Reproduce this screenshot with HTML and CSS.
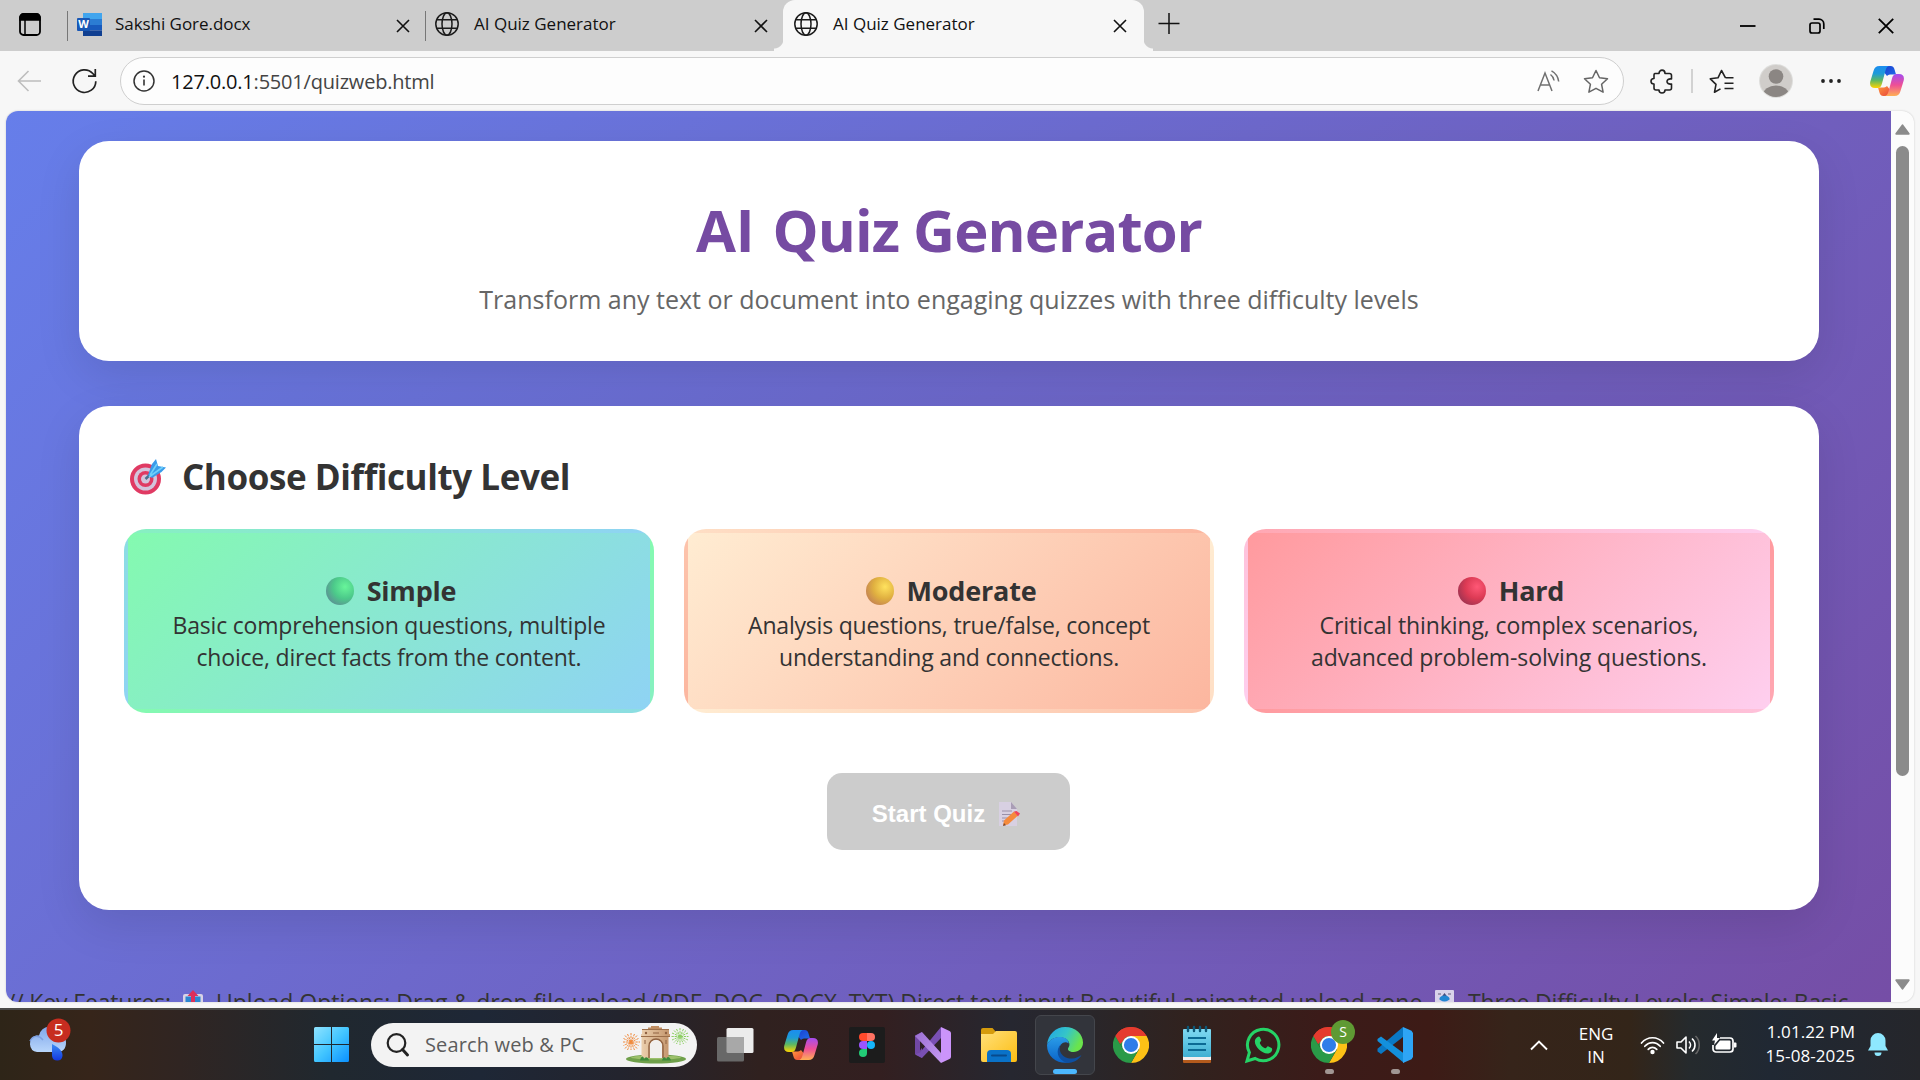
FILE: index.html
```html
<!DOCTYPE html>
<html lang="en">
<head>
<meta charset="utf-8">
<title>AI Quiz Generator</title>
<link rel="stylesheet" href="styles.css">
</head>
<body>
<svg class="defs" width="0" height="0" aria-hidden="true">
  <defs>
    <linearGradient id="cpA" x1="0" y1="0" x2="0" y2="1"><stop offset="0" stop-color="#1b8df0"/><stop offset=".35" stop-color="#1d9bd8"/><stop offset=".65" stop-color="#5bb864"/><stop offset="1" stop-color="#ffd400"/></linearGradient>
    <linearGradient id="cpB" x1="0" y1="0" x2="0" y2="1"><stop offset="0" stop-color="#a44cf0"/><stop offset=".5" stop-color="#ee4f96"/><stop offset="1" stop-color="#ffb054"/></linearGradient>
    <linearGradient id="cpC" x1="0" y1="0" x2="1" y2="1"><stop offset="0" stop-color="#1a3fd0"/><stop offset="1" stop-color="#1f6ce8"/></linearGradient>
    <linearGradient id="cpD" x1="0" y1="0" x2="1" y2="1"><stop offset="0" stop-color="#ff9a3c"/><stop offset="1" stop-color="#e8413c"/></linearGradient>
    <linearGradient id="win" x1="0" y1="0" x2="1" y2="1"><stop offset="0" stop-color="#8fe3ff"/><stop offset=".5" stop-color="#43c6ff"/><stop offset="1" stop-color="#0a90ff"/></linearGradient>
    <linearGradient id="edgeTop" x1="0" y1="0" x2="1" y2=".4"><stop offset="0" stop-color="#1fa2ea"/><stop offset=".55" stop-color="#35c5c8"/><stop offset="1" stop-color="#6ae44c"/></linearGradient>
    <linearGradient id="edgeLow" x1="0" y1="0" x2="0" y2="1"><stop offset="0" stop-color="#2a9ce8"/><stop offset="1" stop-color="#0a63c8"/></linearGradient>
    <linearGradient id="folder" x1="0" y1="0" x2="1" y2="1"><stop offset="0" stop-color="#ffe07a"/><stop offset="1" stop-color="#fdbd12"/></linearGradient>
    <linearGradient id="note" x1="0" y1="0" x2="0" y2="1"><stop offset="0" stop-color="#7fd9f2"/><stop offset="1" stop-color="#3fb0d2"/></linearGradient>
    <linearGradient id="cloud" x1="0" y1="0" x2="0" y2="1"><stop offset="0" stop-color="#7ea6ea"/><stop offset="1" stop-color="#b9d6fb"/></linearGradient>
    <linearGradient id="drop" x1="0" y1="0" x2="0" y2="1"><stop offset="0" stop-color="#3b8cf5"/><stop offset="1" stop-color="#1338e0"/></linearGradient>
    <linearGradient id="stone" x1="0" y1="0" x2="1" y2="0"><stop offset="0" stop-color="#ecd0ae"/><stop offset="1" stop-color="#c4956c"/></linearGradient>
    <linearGradient id="vs" x1="0" y1="0" x2="1" y2="1"><stop offset="0" stop-color="#9a6fd0"/><stop offset="1" stop-color="#c79af5"/></linearGradient>
    <radialGradient id="gDot" cx=".68" cy=".35" r=".7"><stop offset="0" stop-color="#68f59a"/><stop offset=".6" stop-color="#4cc98a"/><stop offset="1" stop-color="#5a9a93"/></radialGradient>
    <radialGradient id="yDot" cx=".68" cy=".35" r=".7"><stop offset="0" stop-color="#ffe25e"/><stop offset=".6" stop-color="#e0b040"/><stop offset="1" stop-color="#c98a50"/></radialGradient>
    <radialGradient id="rDot" cx=".68" cy=".35" r=".7"><stop offset="0" stop-color="#ff5876"/><stop offset=".6" stop-color="#dc3a54"/><stop offset="1" stop-color="#a83552"/></radialGradient>
    <symbol id="globe" viewBox="0 0 24 24"><g fill="none" stroke="#1b1b1b" stroke-width="1.5"><circle cx="12" cy="12" r="11.2"/><ellipse cx="12" cy="12" rx="5" ry="11.2"/><path d="M1.8 7.7h20.4M1.8 16.3h20.4"/></g></symbol>
    <symbol id="x" viewBox="0 0 14 14"><path d="M1 1l12 12M13 1L1 13" fill="none" stroke="#111" stroke-width="1.6"/></symbol>
    <symbol id="copilot" viewBox="0 0 34 30">
      <path d="M14 0h6.500c2.500 0 3.500 1.500 4.200 4l1.300 4.500h-4.500c-2 0-3.300.2-4.500 1.500L13 5z" fill="url(#cpC)"/>
      <path d="M20 30h-6.500c-2.500 0-3.500-1.500-4.200-4L8 21.500h4.500c2 0 3.300-.2 4.500-1.500L21 25z" fill="url(#cpD)"/>
      <path d="M9.500 0H20c-2.800 0-3.800 2-4.500 4.500L12 17.500c-.8 3-2 4.500-4.500 4.500H5c-4 0-5.600-2.500-4.700-6.500L3.500 5C4.500 1.700 6 0 9.500 0z" fill="url(#cpA)"/>
      <path d="M24.500 30H14c2.800 0 3.800-2 4.500-4.500L22 12.500c.8-3 2-4.500 4.500-4.500H29c4 0 5.600 2.500 4.700 6.500L30.500 25c-1 3.300-2.500 5-6 5z" fill="url(#cpB)"/>
    </symbol>
    <symbol id="chrome" viewBox="0 0 36 36">
      <path d="M18 18L2.400 9A18 18 0 0 1 33.600 9z" fill="#e53b2e"/><path d="M18 9h15.600A18 18 0 0 1 18 36l7.800-13.500z" fill="#fdc116"/><path d="M10.200 22.500L2.400 9A18 18 0 0 0 18 36l7.800-13.500z" fill="#2a9a48"/><path d="M2.400 9l7.800 13.500L18 9z" fill="#2a9a48"/><path d="M2.400 9A18 18 0 0 1 33.600 9H18a9 9 0 0 0-8.200 5.500L7 17z" fill="#e53b2e"/>
      <circle cx="18" cy="18" r="9" fill="#fff"/><circle cx="18" cy="18" r="7.100" fill="#2f7de9"/>
    </symbol>
  </defs>
</svg>

<div class="screen">
  <header class="tabstrip">
    <div class="tab-actions">
      <svg width="22" height="23" viewBox="0 0 22 23"><rect x="1" y="1" width="20" height="21" rx="3.500" fill="none" stroke="#000" stroke-width="1.800"/><path d="M1 7V4.500A3.500 3.500 0 0 1 4.500 1h13A3.500 3.500 0 0 1 21 4.500V7zM6 7v15" stroke="#000" stroke-width="1.500"/></svg>
    </div>
    <div class="tab">
      <svg class="fav" width="25" height="23" viewBox="0 0 25 23"><rect x="6" y="0" width="19" height="6" fill="#41a5ee"/><rect x="6" y="6" width="19" height="6" fill="#2b7cd3"/><rect x="6" y="12" width="19" height="5.500" fill="#185abd"/><rect x="6" y="17.500" width="19" height="5.500" fill="#103f91"/><rect x="0" y="5" width="13" height="13" rx="1" fill="#1957b5"/><text x="6.500" y="15.200" class="word-w">W</text></svg>
      <span class="tab-title doc">Sakshi Gore.docx</span>
      <svg class="close" width="14" height="14"><use href="#x"/></svg>
    </div>
    <div class="tab">
      <svg class="fav" width="24" height="24"><use href="#globe"/></svg>
      <span class="tab-title">AI Quiz Generator</span>
      <svg class="close" width="14" height="14"><use href="#x"/></svg>
    </div>
    <div class="tab active">
      <svg class="fav" width="24" height="24"><use href="#globe"/></svg>
      <span class="tab-title">AI Quiz Generator</span>
      <svg class="close" width="14" height="14"><use href="#x"/></svg>
    </div>
    <svg class="newtab" width="22" height="22" viewBox="0 0 22 22"><path d="M11 0v21M.5 10.500h21" stroke="#111" stroke-width="1.500"/></svg>
    <div class="window-buttons">
      <svg width="16" height="16" viewBox="0 0 16 16"><path d="M0 8h15.500" stroke="#000" stroke-width="1.800"/></svg>
      <svg width="16" height="16" viewBox="0 0 16 16"><g fill="none" stroke="#000" stroke-width="1.700"><rect x="1" y="5" width="10" height="10" rx="2"/><path d="M4.500 1.200H10a4.800 4.800 0 0 1 4.800 4.800v5"/></g></svg>
      <svg width="16" height="16" viewBox="0 0 16 16"><path d="M.8.8l14.400 14.400M15.200.8L.8 15.200" stroke="#000" stroke-width="1.800"/></svg>
    </div>
  </header>

  <nav class="toolbar">
    <svg class="back" width="25" height="22" viewBox="0 0 25 22"><path d="M24 11H1M11.500 1L1.500 11l10 10" fill="none" stroke="#bdbdbd" stroke-width="1.600"/></svg>
    <svg class="reload" width="25" height="26" viewBox="0 0 25 26"><path d="M23.800 13.200A11.300 11.300 0 1 1 20.800 5.500L23 8M23.300 1v7.200H16" fill="none" stroke="#222" stroke-width="1.700"/></svg>
    <div class="address">
      <svg width="22" height="22" viewBox="0 0 22 22"><circle cx="11" cy="11" r="10" fill="none" stroke="#333" stroke-width="1.500"/><path d="M11 9.500v6" stroke="#333" stroke-width="1.600"/><circle cx="11" cy="6.700" r="1.100" fill="#333"/></svg>
      <span class="url"><span class="host">127.0.0.1</span>:5501/quizweb.html</span>
      <svg class="read" width="24" height="22" viewBox="0 0 24 22"><g fill="none" stroke="#707070" stroke-width="1.500"><path d="M1 21L8 3l7 18M3.500 15h9M13.500 4.500c2 1.500 3.300 3.500 3.600 6M14.500.8c4 2.200 6.600 5.700 7.200 10.700"/></g></svg>
      <svg class="star" width="26" height="25" viewBox="0 0 26 25"><path d="M13 1.500l3.500 7.300 8 1-5.900 5.500 1.500 7.900L13 19.300l-7.100 3.900 1.500-7.900L1.500 9.800l8-1z" fill="none" stroke="#666" stroke-width="1.500" stroke-linejoin="round"/></svg>
    </div>
    <svg class="puzzle" width="24" height="25" viewBox="0 0 24 25"><path d="M5 4.500h4c0-4.500 6-4.500 6 0h4.500a2 2 0 0 1 2 2V10c-6-1-6 6 0 5v4a2 2 0 0 1-2 2H15c0 4-6 4-6 0H6a2 2 0 0 1-2-2v-4c-4 0-4-5.500 0-5.500V6a1.500 1.500 0 0 1 1-1.500z" fill="none" stroke="#222" stroke-width="1.600" stroke-linejoin="round"/></svg>
    <i class="divider"></i>
    <svg class="favs" width="26" height="25" viewBox="0 0 26 25"><path d="M16.500 8.800L12.500 1.500 9 8.800l-7.700 1 5.700 5.500-1.500 7.900 6-3.300M16.500 8.800h8M15.500 14.200h9M15.500 19.500h9" fill="none" stroke="#222" stroke-width="1.600" stroke-linejoin="round"/></svg>
    <svg class="avatar" width="34" height="34" viewBox="0 0 34 34"><clipPath id="av"><circle cx="17" cy="17" r="16"/></clipPath><circle cx="17" cy="17" r="17" fill="#dededc"/><circle cx="17" cy="17" r="16" fill="#d0cdca"/><g clip-path="url(#av)" fill="#8b8683"><circle cx="17" cy="12.500" r="7.300"/><ellipse cx="17" cy="31" rx="13" ry="9.500"/></g></svg>
    <svg class="more" width="20" height="4" viewBox="0 0 20 4"><g fill="#222"><circle cx="2" cy="2" r="1.900"/><circle cx="10" cy="2" r="1.900"/><circle cx="18" cy="2" r="1.900"/></g></svg>
    <svg class="cop" width="34" height="30"><use href="#copilot"/></svg>
  </nav>

  <div class="viewport">
    <main class="page">
      <section class="card hero">
        <h1>A<span class="cap-i">I</span> Quiz Generator</h1>
        <p>Transform any text or document into engaging quizzes with three difficulty levels</p>
      </section>
      <section class="card chooser">
        <h2>
          <svg width="38" height="37" viewBox="0 0 38 37"><circle cx="16.500" cy="21" r="15.500" fill="#e03a63"/><circle cx="16.500" cy="21" r="11.500" fill="#d3c4dc"/><circle cx="16.500" cy="21" r="8" fill="#e03a63"/><circle cx="16.500" cy="21" r="4.500" fill="#d3c4dc"/><path d="M16.500 21L26 12" stroke="#47708f" stroke-width="2.500"/><path d="M19 17l4-11 4-5 2 7 8 1.500-4.500 4.500-9.500 6z" fill="#3a9bea"/><path d="M20 19L34 9M21 17l7-11" stroke="#6fd0fa" stroke-width="1.600"/></svg>
          <span>Choose Difficulty Level</span>
        </h2>
        <div class="levels">
          <article class="level simple">
            <h3><svg width="28" height="28"><circle cx="14" cy="14" r="14" fill="url(#gDot)"/></svg><span>Simple</span></h3>
            <p>Basic comprehension questions, multiple<br>choice, direct facts from the content.</p>
          </article>
          <article class="level moderate">
            <h3><svg width="28" height="28"><circle cx="14" cy="14" r="14" fill="url(#yDot)"/></svg><span>Moderate</span></h3>
            <p>Analysis questions, true/false, concept<br>understanding and connections.</p>
          </article>
          <article class="level hard">
            <h3><svg width="28" height="28"><circle cx="14" cy="14" r="14" fill="url(#rDot)"/></svg><span>Hard</span></h3>
            <p>Critical thinking, complex scenarios,<br>advanced problem-solving questions.</p>
          </article>
        </div>
        <button class="start" type="button">Start Quiz
          <svg width="22" height="24" viewBox="0 0 22 24"><path d="M0 0h12l6 7v17H0z" fill="#d8d0e2"/><path d="M12 0v7h6z" fill="#a99db5"/><path d="M3 9h10M3 12.500h9M3 16h6M3 19h4" stroke="#9a90a8" stroke-width="1"/><path d="M4 23.500l1-5L15 9.500l4 4-10 9z" fill="#f58a3c"/><path d="M15 9.500l2.500-.5 3.500 2.500-2 3z" fill="#f0435a"/><path d="M4 24l1-3 2 2.200z" fill="#7a4a30"/></svg>
        </button>
      </section>
      <p class="features">
        <span class="f1">// Key Features:</span>
        <svg class="tray" width="20" height="24" viewBox="0 0 20 24"><rect x="0" y="4" width="20" height="20" rx="2" fill="#d9d3e6"/><rect x="2.500" y="6.500" width="15" height="18" fill="#2b86d0"/><path d="M10 0l5.500 6H12v8H8V6H4.500z" fill="#dc2f5a"/></svg>
        <span class="f2">Upload Options: Drag &amp; drop file upload (PDF, DOC, DOCX, TXT) Direct text input Beautiful animated upload zone</span>
        <svg class="chip" width="19" height="24" viewBox="0 0 19 24"><rect width="19" height="24" rx="1" fill="#d9d3ea"/><path d="M3 4h3M13 4h3M3 15h3M13 15h3" stroke="#8a84a0" stroke-width="1.500"/><path d="M9.500 3l3 4 2 3H4.500l2-3z" fill="#454b7c"/><ellipse cx="9.500" cy="8.500" rx="5" ry="3" fill="#2386d2"/></svg>
        <span class="f3">Three Difficulty Levels: Simple: Basic</span>
      </p>
    </main>
    <aside class="scrollbar">
      <svg width="15" height="11" viewBox="0 0 15 11"><path d="M7.500 1.200L13.800 9.800H1.200z" fill="#8b8b8b" stroke="#8b8b8b" stroke-width="1.800" stroke-linejoin="round"/></svg>
      <div class="track"><div class="thumb"></div></div>
      <svg width="15" height="11" viewBox="0 0 15 11"><path d="M7.500 9.800L13.800 1.200H1.200z" fill="#8b8b8b" stroke="#8b8b8b" stroke-width="1.800" stroke-linejoin="round"/></svg>
    </aside>
  </div>

  <footer class="taskbar">
    <div class="weather">
      <svg width="42" height="46" viewBox="0 0 42 46"><path d="M8 35a8.500 8.500 0 0 1-1-16.500h3a12 12 0 0 1 22-3c3 2 5 5 5 10 0 6-3 9.500-8 9.500z" fill="url(#cloud)"/><path d="M1 24c3-6 9-6 13-1" fill="none" stroke="#7d9fe0" stroke-width="1.500"/><path d="M23 27c6 3 11 7 10.500 12a5.300 5.300 0 0 1-10.500 0z" fill="url(#drop)"/><circle cx="29.500" cy="13.500" r="12" fill="#c72d20"/><text x="29.500" y="19.300" class="count">5</text></svg>
    </div>
    <div class="apps">
      <div class="app"><svg width="35" height="35" viewBox="0 0 35 35"><path d="M1.500 0H17v17H0V1.500A1.500 1.500 0 0 1 1.500 0zM18 0h15.500A1.500 1.500 0 0 1 35 1.500V17H18zM0 18h17v17H1.500A1.500 1.500 0 0 1 0 33.500zM18 18h17v15.500a1.500 1.500 0 0 1-1.500 1.500H18z" fill="url(#win)"/></svg></div>
      <div class="search">
        <svg width="24" height="24" viewBox="0 0 24 24"><circle cx="10.500" cy="10" r="8.800" fill="none" stroke="#222" stroke-width="2.200"/><path d="M16.500 16.500l5 5.500" stroke="#222" stroke-width="3" stroke-linecap="round"/></svg>
        <span>Search web &amp; PC</span>
        <svg class="gate" width="68" height="38" viewBox="0 0 68 38">
          <ellipse cx="34" cy="33" rx="30" ry="4.500" fill="#6fa04a"/><ellipse cx="34" cy="31.500" rx="25" ry="2" fill="#9cc06a"/>
          <path d="M20 3h27v5h1v3h-1.500v21H40V20a6 6 0 0 0-12 0v12h-8.500V11H19V8h1z" fill="url(#stone)"/><path d="M26 1.500h14V3H26zM29 0h8v2h-8z" fill="#c08e62"/><path d="M20 3.500h27M19 10.500h29" stroke="#9c6f4a" stroke-width="1"/><path d="M41 32V20a7 7 0 0 0-14 0v12" fill="none" stroke="#8f6242" stroke-width="1.400"/><path d="M28 32V20a6 6 0 0 1 12 0v12z" fill="#f1f0ee"/><path d="M31 7h6M23 14v4M44 14v4" stroke="#8f6242"/><circle cx="24" cy="7" r="1.200" fill="#8f6242"/><circle cx="44" cy="7" r="1.200" fill="#8f6242"/>
          <path d="M18 34.500c1-5 4-5 4-1 1-3 4-3 5 1zM40 34.500c1-4 4-4 4-1 1-4 4-3 5 1z" fill="#3c8a3a"/>
          <g fill="none" stroke-dasharray="2.300 .8"><path d="M9 7v17M1 16h17M3 9.500l12 13M15 9.500L3 22.500M5.500 8l7 16M12.500 8l-7 16M1.500 12.500l15 7M16.500 12.500l-15 7" stroke="#f0893a" stroke-width="1"/><path d="M58 2v17M49.500 10.500h17M52 4.500l12 12M64 4.500l-12 12M54.500 3l7 15M61.500 3l-7 15M50 7l16 7M66 7l-16 7" stroke="#8ccf62" stroke-width="1"/></g>
        </svg>
      </div>
      <div class="app"><svg width="37" height="36" viewBox="0 0 37 36"><rect x="9.500" y="1" width="27" height="25" rx="1.500" fill="#ececec"/><rect x="0" y="10" width="27" height="24.500" rx="1.500" fill="#686868"/><path d="M9.500 10H27v16H11a1.500 1.500 0 0 1-1.500-1.500z" fill="#a8a8a8"/></svg></div>
      <div class="app"><svg width="34" height="30"><use href="#copilot"/></svg></div>
      <div class="app"><svg width="36" height="36" viewBox="0 0 36 36"><rect width="36" height="36" rx="2" fill="#1c1c1c"/><path d="M18 6h-4a4 4 0 0 0 0 8h4z" fill="#ff4a2c"/><path d="M18 6h4a4 4 0 0 1 0 8h-4z" fill="#ff7262"/><path d="M18 14h-4a4 4 0 0 0 0 8h4z" fill="#9b55ff"/><circle cx="22" cy="18" r="4" fill="#16b5fa"/><path d="M18 22h-4a4 4 0 1 0 4 4z" fill="#22cc76"/></svg></div>
      <div class="app"><svg width="36" height="36" viewBox="0 0 36 36"><path d="M0 8.500L7 5v26l-7-4z" fill="#7148a4"/><path d="M5 12.500L9 18l-4 5.500z" fill="#2e2028"/><path d="M26 0v11L7 31 0 27.500l5-2z" fill="#7a50b4"/><path d="M0 9l7-4 19 21v10z" fill="url(#vs)"/><path d="M26 0l8.500 4a2.500 2.500 0 0 1 1.500 2v24a2.500 2.500 0 0 1-1.500 2L26 36z" fill="#cb94fa"/></svg></div>
      <div class="app"><svg width="36" height="34" viewBox="0 0 36 34"><path d="M0 8V2a2 2 0 0 1 2-2h9.500L15 4v4z" fill="#d59b0c"/><path d="M0 6h12l3-3h19a2 2 0 0 1 2 2v27a2 2 0 0 1-2 2H2a2 2 0 0 1-2-2z" fill="url(#folder)"/><path d="M6 34v-8a4 4 0 0 1 4-4h16a4 4 0 0 1 4 4v8z" fill="#0a72c8"/><path d="M11 27.500h14" stroke="#084a8c" stroke-width="2" stroke-linecap="round"/></svg></div>
      <div class="app current"><svg width="36" height="36" viewBox="0 0 36 36"><path d="M0 18C1 7 9 0 18 0c11 0 18 7.500 18 15.500 0 6-4.500 9.500-9.500 9.500-5 0-6.500-2.500-5-4.500 1-1.500 1.500-3.500 0-6C18 8.500 4 8.500 0 18z" fill="url(#edgeTop)"/><path d="M0 18C3 10 13 8.500 18 11c3 1.500 4 4 3.500 5.500C18 13 12 17 12 23c0 7 7 12 13 11.500C15 38.500 0 33 0 18z" fill="url(#edgeLow)"/><path d="M14 17c-4 7 2 15 11 14.500 4 0 7-2 9.500-3.500C32 33 26 36 20 36 10 33 8 23 14 17z" fill="#0e4fa0"/></svg><i></i></div>
      <div class="app"><svg width="36" height="36"><use href="#chrome"/></svg></div>
      <div class="app"><svg width="28" height="36" viewBox="0 0 28 36"><rect y="29" width="28" height="7" rx="1" fill="#b35a1c"/><rect y="26" width="28" height="7" fill="#f1eeee"/><rect y="2" width="28" height="28" rx="1" fill="url(#note)"/><path d="M5 11h18M5 17h18M5 23h18" stroke="#0b6a94" stroke-width="2"/><path d="M5 0v4M11 0v4M17 0v4M23 0v4" stroke="#0c5878" stroke-width="2.400" stroke-linecap="round"/></svg></div>
      <div class="app"><svg width="36" height="36" viewBox="0 0 36 36"><path d="M2 34l2.400-8.500A15.700 15.700 0 1 1 10.200 31.500z" fill="none" stroke="#25d366" stroke-width="3"/><path d="M12.500 10c-5 3-2 9 1.500 12.500s9.500 6 12.500 2c1-1.500.8-3 0-3.500l-3.500-1.700c-1 0-1.500 2-2.700 2-2-.6-5-3.300-5.500-5.300 0-1.200 1.500-1.500 1.500-2.700L14.700 10c-.5-.8-1.500-.6-2.200 0z" fill="#25d366"/></svg></div>
      <div class="app running"><svg width="36" height="36"><use href="#chrome"/></svg><b class="profile">S</b><i></i></div>
      <div class="app running"><svg width="36" height="36" viewBox="0 0 36 36"><path d="M26 0v10L4 27l-3.500-2.500v-2.700z" fill="#0a78c4"/><path d="M.5 12L4 9.500l23 17V36L.5 14z" fill="#1390dc"/><path d="M26 0l8.500 3.800L36 6v24l-1.500 2.200L26 36z" fill="#2ea5f5"/></svg><i></i></div>
    </div>
    <div class="tray-area">
      <svg class="chev" width="18" height="11" viewBox="0 0 18 11"><path d="M1 9.500L9 1.500l8 8" fill="none" stroke="#fff" stroke-width="1.900"/></svg>
      <div class="lang">ENG<br>IN</div>
      <svg class="wifi" width="25" height="19" viewBox="0 0 25 19"><g fill="none" stroke="#fff" stroke-width="1.700" stroke-linecap="round"><path d="M1.500 7c6-7 16-7 22 0M4.800 10.300c4.500-5 11-5 15.400 0M8.200 13.300c2.500-2.700 6-2.700 8.600 0"/></g><circle cx="12.500" cy="16" r="2.200" fill="#fff"/></svg>
      <svg class="vol" width="25" height="20" viewBox="0 0 25 20"><path d="M1 7h4l5-5v16l-5-5H1z" fill="none" stroke="#fff" stroke-width="1.600" stroke-linejoin="round"/><path d="M13 6.500c2 2 2 5 0 7M16 3.500c4 3.500 4 9.500 0 13" fill="none" stroke="#fff" stroke-width="1.600"/><path d="M19.500 1c5 4.500 5 13.500 0 18" fill="none" stroke="#666" stroke-width="1.600"/></svg>
      <svg class="bat" width="25" height="21" viewBox="0 0 25 21"><path d="M8 5h10a3 3 0 0 1 3 3v8a3 3 0 0 1-3 3H4a3 3 0 0 1-3-3v-4" fill="none" stroke="#fff" stroke-width="1.700"/><path d="M8 7.500h9.500a1 1 0 0 1 1 1v7a1 1 0 0 1-1 1h-13a1 1 0 0 1-1-1V13z" fill="#fff"/><path d="M22 9.500h1.500a1 1 0 0 1 1 1v3a1 1 0 0 1-1 1H22zM5 0L0 7.500h3L2 12l6-7H5z" fill="#fff"/></svg>
      <div class="clock">1.01.22 PM<br>15-08-2025</div>
      <svg class="bell" width="20" height="24" viewBox="0 0 20 24"><path d="M10 0a7.500 7.500 0 0 1 7.500 7.500V13l2.500 4.500H0L2.500 13V7.500A7.500 7.500 0 0 1 10 0zM6.500 19.500h7a3.500 3.500 0 0 1-7 0z" fill="#8ee8ff"/></svg>
    </div>
  </footer>
</div>
</body>
</html>
```
FILE: styles.css
```css
* { box-sizing: border-box; }
body { margin: 0; font-family: "Open Sans", "Noto Sans", sans-serif; color: #333; }
h1, h2, h3, p { margin: 0; }
svg { display: block; flex: none; overflow: visible; }
.defs { position: absolute; }
.screen { width: 1920px; height: 1080px; display: flex; flex-direction: column; overflow: hidden; background: #f7f7f7; }

/* Tab strip */
.tabstrip { height: 51px; flex: none; display: flex; align-items: center; background: #cdcdcd; }
.tab-actions { width: 67px; padding: 0 0 3px 19px; }
.tab { width: 358px; height: 51px; display: flex; align-items: center; padding: 0 15px 3px 10px; position: relative; }
.tab::before { content: ""; position: absolute; left: 0; top: 11px; width: 1px; height: 30px; background: #777; }
.tab .fav { margin-right: 15px; }
.tab-title { flex: 1; font-size: 17px; padding-bottom: 2px; color: #111; white-space: nowrap; }
.tab-title.doc { margin-left: -2px; letter-spacing: -.05px; }
.close { margin-top: 3px; }
.tab.active { width: 361px; background: #f7f7f7; border-radius: 12px 12px 0 0; padding: 0 17px 3px 11px; }
.tab.active::before { left: -9px; top: auto; bottom: 0; width: 9px; height: 12px; background: radial-gradient(circle at 0 0, transparent 9px, #f7f7f7 10px); }
.tab.active::after { content: ""; position: absolute; right: -9px; bottom: 0; width: 9px; height: 12px; background: radial-gradient(circle at 100% 0, transparent 9px, #f7f7f7 10px); }
.newtab { margin: 0 0 4px 14px; }
.window-buttons { margin-left: auto; display: flex; gap: 53px; padding-right: 26px; }
.word-w { font: bold 11px "Open Sans", sans-serif; fill: #fff; text-anchor: middle; }

/* Toolbar */
.toolbar { height: 60px; flex: none; display: flex; align-items: center; padding-left: 17px; }
.reload { margin-left: 30px; }
.address { width: 1504px; height: 48px; margin-left: 23px; border: 1.500px solid #cfcfcf; border-radius: 24px; background: #fdfdfd; display: flex; align-items: center; padding: 0 14px 0 12px; }
.url { margin-left: 16px; font-size: 20px; letter-spacing: -.2px; color: #444; white-space: nowrap; }
.host { color: #111; }
.read { margin-left: auto; }
.star { margin-left: 22px; }
.puzzle { margin-left: 26px; }
.divider { width: 2px; height: 24px; margin-left: 17px; background: #d2d2d2; }
.favs { margin-left: 16px; }
.avatar { margin-left: 24px; }
.more { margin-left: 28px; }
.cop { margin-left: 29px; }

/* Browser viewport */
.viewport { width: 1908px; height: 891px; flex: none; margin-left: 6px; display: flex; border-radius: 12px; overflow: hidden; background: #fcfcfc; box-shadow: 0 0 2px #c4c4c4; }
.page { width: 1885px; height: 891px; padding: 30px 72px 0 73px; overflow: hidden; display: flex; flex-direction: column; background: linear-gradient(135deg, #667eea 0%, #764ba2 100%) 0 0 / 100% 1050px; }
.card { background: #fff; border-radius: 30px; box-shadow: 0 15px 45px rgba(0, 0, 0, .1); flex: none; }
.hero { height: 220px; text-align: center; padding-top: 48px; }
.hero h1 { font-size: 58px; line-height: 82px; font-weight: 700; letter-spacing: -.95px; color: #764ba2; }
.cap-i { font-family: Inter, sans-serif; line-height: 1; margin: 0 6px 0 2px; }
.hero p { font-size: 25px; line-height: 36px; margin-top: 10px; color: #666; }
.chooser { height: 504px; margin-top: 45px; padding: 45px; display: flex; flex-direction: column; align-items: center; }
.chooser h2 { align-self: stretch; height: 50px; display: flex; align-items: center; gap: 15px; padding-left: 5px; font-size: 35px; line-height: 50px; letter-spacing: -.43px; }
.chooser h2 span { padding-top: 2px; }
.levels { align-self: stretch; display: grid; grid-template-columns: repeat(3, 1fr); gap: 30px; margin-top: 28px; }
.level { height: 184px; border: 4px solid transparent; border-radius: 22px; text-align: center; padding-top: 39px; }
.level h3 { display: flex; justify-content: center; align-items: center; gap: 13px; padding-left: 4px; font-size: 27px; line-height: 38px; letter-spacing: -.2px; }
.level p { margin-top: -1px; font-size: 23px; line-height: 32px; letter-spacing: -.2px; white-space: nowrap; }
.level.hard p { letter-spacing: -.1px; }
.simple { background-image: linear-gradient(135deg, #84fab0, #8fd3f4); }
.moderate { background-image: linear-gradient(135deg, #ffecd2, #fcb69f); }
.hard { background-image: linear-gradient(135deg, #ff9a9e, #fecfef); }
.start { width: 243px; height: 77px; margin: 60px 1px 0 0; border: 0; border-radius: 15px; background: #ccc; color: #fff; font: bold 24px "Liberation Sans", Arial, sans-serif; display: flex; align-items: center; justify-content: center; gap: 14px; padding: 4px 4px 0 0; }
.features { display: flex; margin: 76px 0 0 -72px; font-size: 23px; line-height: 32px; letter-spacing: -.16px; white-space: nowrap; flex: none; }
.features span { flex: none; }
.f1 { width: 176px; }
.tray { margin-top: 4px; }
.f2 { width: 1205px; margin-left: 13px; letter-spacing: 0; }
.chip { margin: 4px 0 0 14px; }
.f3 { margin-left: 14px; }
.scrollbar { flex: 1; display: flex; flex-direction: column; align-items: center; padding: 13px 4px 12px; }
.track { flex: 1; padding-top: 11px; }
.thumb { width: 13px; height: 630px; border-radius: 7px; background: #8b8b8b; }

/* Taskbar */
.taskbar { height: 72px; margin-top: 6px; flex: none; display: flex; border-top: 2px solid #4b4a48; color: #fff; background: linear-gradient(90deg, #2e2518 0, #36251a 90px, #302522 180px, #20282f 330px, #1e2736 480px, #23242e 620px, #30211f 760px, #331f20 880px, #262730 1010px, #29262a 1090px, #31221e 1190px, #3b1b19 1320px, #3d1b16 1430px, #36241a 1510px, #332519 1630px, #252a2d 1690px, #202833 1770px, #25262b 1920px); }
.weather { width: 298px; padding: 7px 0 0 29px; }
.count { font: 17px "Open Sans", sans-serif; fill: #fff; text-anchor: middle; }
.apps { display: flex; align-items: center; padding-bottom: 1px; }
.app { width: 66px; height: 60px; display: flex; align-items: center; justify-content: center; position: relative; }
.current::before { content: ""; position: absolute; inset: 0 3px; border: 1px solid #44464c; border-radius: 6px; background: #32343b; }
.current svg { position: relative; }
.app i { position: absolute; left: 28.500px; bottom: 1px; width: 9px; height: 5px; border-radius: 3px; background: #a19693; }
.current i { left: 21px; width: 24px; background: #4cb8ff; }
.profile { position: absolute; left: 35px; top: 5px; width: 24px; height: 24px; border-radius: 50%; background: #5f9a33; font-size: 14px; font-weight: 400; line-height: 24px; text-align: center; }
.search { width: 326px; height: 44px; margin: 0 5px 0 7px; border-radius: 22px; background: #f3f3f3; display: flex; align-items: center; padding: 0 7px 0 15px; color: #5c5c5c; }
.search span { margin-left: 15px; font-size: 20px; letter-spacing: .15px; white-space: nowrap; }
.gate { margin-left: auto; }
.tray-area { margin-left: auto; display: flex; align-items: center; font-size: 17px; line-height: 24px; padding-right: 32px; }
.lang { width: 50px; margin-left: 23px; text-align: center; line-height: 23px; padding-bottom: 1px; }
.wifi { margin-left: 19px; }
.vol { margin-left: 11px; }
.bat { margin-left: 11px; margin-top: -3px; }
.clock { width: 103px; margin-left: 15px; text-align: right; white-space: nowrap; padding-bottom: 2px; letter-spacing: .08px; }
.bell { margin-left: 13px; }
```
